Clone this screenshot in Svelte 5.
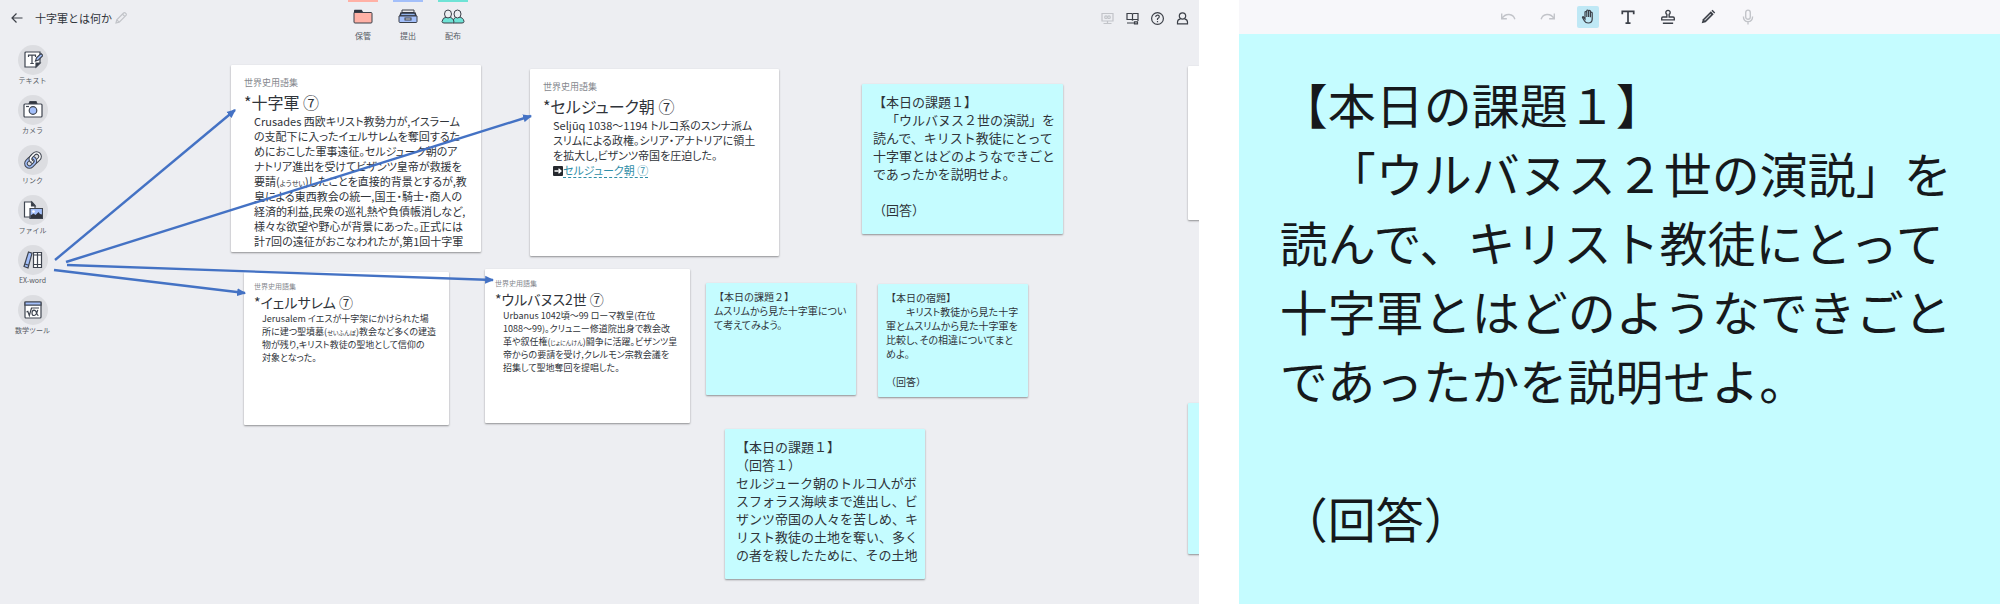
<script>
	const tools = [
		{ id: 'text', label: 'テキスト' },
		{ id: 'camera', label: 'カメラ' },
		{ id: 'link', label: 'リンク' },
		{ id: 'file', label: 'ファイル' },
		{ id: 'exword', label: 'EX-word' },
		{ id: 'math', label: '数学ツール' }
	];

	const boxes = [
		{ id: 'store', label: '保管' },
		{ id: 'submit', label: '提出' },
		{ id: 'share', label: '配布' }
	];

	const source = '世界史用語集';

	const entries = [
		{
			x: 231,
			y: 65,
			w: 250,
			h: 187,
			title: '十字軍 ⑦',
			lines: [
				'Crusades 西欧キリスト教勢力が,イスラーム',
				'の支配下に入ったイェルサレムを奪回するた',
				'めにおこした軍事遠征。セルジューク朝のア',
				'ナトリア進出を受けてビザンツ皇帝が救援を',
				'要請(ようせい)したことを直接的背景とするが,教',
				'皇による東西教会の統一,国王・騎士・商人の',
				'経済的利益,民衆の巡礼熱や負債帳消しなど,',
				'様々な欲望や野心が背景にあった。正式には',
				'計7回の遠征がおこなわれたが,第1回十字軍'
			]
		},
		{
			x: 530,
			y: 69,
			w: 249,
			h: 187,
			title: 'セルジューク朝 ⑦',
			lines: [
				'Seljūq 1038〜1194 トルコ系のスンナ派ム',
				'スリムによる政権。シリア・アナトリアに領土',
				'を拡大し,ビザンツ帝国を圧迫した。'
			],
			link: 'セルジューク朝 ⑦'
		},
		{
			x: 244,
			y: 272,
			w: 205,
			h: 153,
			small: true,
			title: 'イェルサレム ⑦',
			lines: [
				'Jerusalem イエスが十字架にかけられた場',
				'所に建つ聖墳墓(せいふんぼ)教会など多くの建造',
				'物が残り,キリスト教徒の聖地として信仰の',
				'対象となった。'
			]
		},
		{
			x: 485,
			y: 269,
			w: 205,
			h: 154,
			small: true,
			title: 'ウルバヌス2世 ⑦',
			lines: [
				'Urbanus 1042頃〜99 ローマ教皇(在位',
				'1088〜99)。クリュニー修道院出身で教会改',
				'革や叙任権(じょにんけん)闘争に活躍。ビザンツ皇',
				'帝からの要請を受け,クレルモン宗教会議を',
				'招集して聖地奪回を提唱した。'
			]
		}
	];

	const task = [
		'【本日の課題１】',
		'　「ウルバヌス２世の演説」を',
		'読んで、キリスト教徒にとって',
		'十字軍とはどのようなできごと',
		'であったかを説明せよ。',
		'',
		'（回答）'
	];

	const notes = [
		{ x: 862, y: 84, w: 201, h: 150, lines: task },
		{
			x: 706,
			y: 283,
			w: 150,
			h: 112,
			small: true,
			lines: ['【本日の課題２】', 'ムスリムから見た十字軍につい', 'て考えてみよう。']
		},
		{
			x: 878,
			y: 284,
			w: 150,
			h: 113,
			small: true,
			lines: [
				'【本日の宿題】',
				'　　キリスト教徒から見た十字',
				'軍とムスリムから見た十字軍を',
				'比較し、その相違についてまと',
				'めよ。',
				'',
				'（回答）'
			]
		},
		{
			x: 725,
			y: 429,
			w: 200,
			h: 150,
			lines: [
				'【本日の課題１】',
				'（回答１）',
				'セルジューク朝のトルコ人がボ',
				'スフォラス海峡まで進出し、ビ',
				'ザンツ帝国の人々を苦しめ、キ',
				'リスト教徒の土地を奪い、多く',
				'の者を殺したために、その土地'
			]
		},
		{ x: 1188, y: 403, w: 200, h: 151, lines: [] }
	];

	const arrows = [
		[55, 260, 235, 110],
		[66, 262, 531, 116],
		[67, 265, 493, 280],
		[54, 270, 245, 293]
	];

	// odd pieces are the readings written inside the parentheses
	const splitReading = (line) => line.split(/(?<=\()([ぁ-ん]+)(?=\))/);
	const place = (c) => `left: ${c.x}px; top: ${c.y}px; width: ${c.w}px; height: ${c.h}px`;
</script>

<div class="app">
	<main class="board">
		<header class="topbar">
			<div class="heading">
				<button class="icon-button" aria-label="戻る">
					<svg width="12" height="12" viewBox="0 0 12 12" class="line"><path d="M11.5 6H1M5.500 1.500L1 6l4.500 4.500" /></svg>
				</button>
				<h1>十字軍とは何か</h1>
				<button class="icon-button pale" aria-label="名前を編集">
					<svg width="12" height="12" viewBox="0 0 12 12" class="line"><path d="M1 11l.8-3.200L8.600 1a1.200 1.200 0 0 1 1.700 0l.7.7a1.200 1.200 0 0 1 0 1.700L4.200 10.200zM7.500 2.200l2.300 2.300M1.800 7.800l2.400 2.400" /></svg>
				</button>
			</div>

			<nav class="boxes">
				{#each boxes as box}
					<button class="box {box.id}">
						{#if box.id === 'store'}
							<svg width="22" height="16" viewBox="0 0 22 16">
								<path d="M2 5V1.500Q2 .8 2.700.8h7L11 3v2z" fill="#2f3440" />
								<path d="M2 3.500h17q1 0 1 1V13q0 1-1 1H3q-1 0-1-1z" fill="#ffb1a6" stroke="#3a3f49" />
							</svg>
						{:else if box.id === 'submit'}
							<svg width="22" height="16" viewBox="0 0 22 16">
								<path d="M5 1h12v2.500H5z" fill="#e7e8ec" stroke="#3a3f49" />
								<path d="M4 4h14l1 3H3z" fill="#8fb0e8" stroke="#2f3440" stroke-width="1.500" />
								<path d="M2 7h18v5.500q0 1-1 1H3q-1 0-1-1z" fill="#a3bffa" stroke="#3a3f49" />
								<rect x="8" y="9" width="6" height="2" fill="#dfe2ea" stroke="#3a3f49" />
							</svg>
						{:else}
							<svg width="24" height="16" viewBox="0 0 24 16">
								<g stroke="#3a3f49" fill="#6fe3d6">
									<path d="M12 14q-.5-5.500 4.500-6h1q5 .3 5.500 4.500 0 1.500-2 1.500z" />
									<ellipse cx="16.500" cy="5" rx="3.500" ry="4" fill="#edeef2" />
									<path d="M1 12.500Q1.500 8.300 6 8h1.500q5 .5 5.500 5 0 1-1.500 1H3q-2 0-2-1.500z" />
									<ellipse cx="7" cy="5" rx="3.500" ry="4" fill="#edeef2" />
								</g>
							</svg>
						{/if}
						<span>{box.label}</span>
					</button>
				{/each}
			</nav>

			<div class="actions">
				<button class="icon-button pale" aria-label="画面共有">
					<svg width="13" height="13" viewBox="0 0 13 13" class="line"><path d="M1 1.500h11v7.500H1zM2.500 11.500h8M6.500 9v2.500" /><circle cx="5" cy="5.200" r="1.300" /><circle cx="8" cy="5.200" r="1.300" /></svg>
				</button>
				<button class="icon-button" aria-label="表示">
					<svg width="13" height="13" viewBox="0 0 13 13" class="line"><path d="M6.500 2L5.500 1.500H1v6h4.500l1 .5 1-.5H12v-6H7.500zM6.500 2v6M1 11h7M12 7.500V9M8.500 9.800h3v2h-3z" /></svg>
				</button>
				<button class="icon-button" aria-label="ヘルプ">
					<svg width="13" height="13" viewBox="0 0 13 13" class="line"><circle cx="6.500" cy="6.500" r="5.900" /><path d="M4.700 5q0-1.900 1.800-1.900T8.300 4.800q0 1-1.800 2V8M6.500 9v1.200" /></svg>
				</button>
				<button class="icon-button" aria-label="アカウント">
					<svg width="13" height="13" viewBox="0 0 13 13" class="line"><circle cx="6.500" cy="4" r="3.200" /><path d="M4.500 6.800Q1.500 7.500 1.500 10v1.800h10V10q0-2.500-3-3.200" /></svg>
				</button>
			</div>
		</header>

		<nav class="tools">
			{#each tools as tool}
				<button class="tool">
					<span class="disc">
						<svg width="20" height="20" viewBox="0 0 20 20" fill="#fff" stroke="#3f4550" stroke-width="1.200">
							{#if tool.id === 'text'}
								<path d="M2 3q0-1 1-1h14v11l-4 4H2z" />
								<path d="M13 17v-4h4z" fill="#30343d" />
								<path d="M5.500 7V5.200h7V7M9 5.200v8M7.300 13.500h3.500" fill="none" />
								<path d="M12.500 11l1-3.200L18 3.500l2 2-4.500 4.500z" fill="#a3bffa" />
							{:else if tool.id === 'camera'}
								<path d="M6 4l1-2.500h6L14 4z" fill="#30343d" />
								<rect x="1" y="4" width="18" height="13" rx="1" />
								<circle cx="10" cy="10.500" r="3.800" fill="#a3bffa" />
								<path d="M3 6.500h3" />
							{:else if tool.id === 'link'}
								<g fill="none" transform="rotate(-45 10 10)">
									<rect x="8" y="6.500" width="10.500" height="7" rx="3.500" stroke-width="3.600" />
									<rect x="8" y="6.500" width="10.500" height="7" rx="3.500" stroke="#fff" stroke-width="1.600" />
									<rect x="1.500" y="6.500" width="10.500" height="7" rx="3.500" stroke-width="3.600" />
									<rect x="1.500" y="6.500" width="10.500" height="7" rx="3.500" stroke="#a3bffa" stroke-width="1.600" />
									<path d="M8 10q0-3.500 3.500-3.500h2" stroke-width="3.600" />
									<path d="M8 10q0-3.500 3.500-3.500h2.500" stroke="#fff" stroke-width="1.600" />
								</g>
							{:else if tool.id === 'file'}
								<path d="M1.500 2H9l3 3.500V17H1.500z" />
								<path d="M8.500 2v4H12z" fill="#30343d" />
								<path d="M7 8.500h12.500v10H7z" fill="#a3bffa" />
								<path d="M7.500 18v-2.500l3-2 2 1.500 3-3 1.500 2 2 .5V18z" fill="#30343d" stroke="none" />
								<circle cx="10.500" cy="11.500" r="1.300" stroke="none" />
							{:else if tool.id === 'exword'}
								<path d="M5.500 2l3.500 1.200L5 18l-4-1.500z" fill="#a3bffa" />
								<path d="M2 14l3.800 1.300" />
								<path d="M10.500 2.500h4v15h-4zM14.500 2.500h4v15h-4zM10.500 14.500h8M10.500 5h8" />
							{:else}
								<rect x="2" y="2" width="16" height="16" rx="1" />
								<path d="M2 2h16v3.200H2z" fill="#a3bffa" />
								<path d="M3.500 12l1.300-.6L6.300 15.500 8.500 8H16" fill="none" />
								<path d="M14.800 9.800q-1.500 5.700-4 5.700-1.800 0-1.800-2.500t2-2.800q2 0 2.800 3.300.5 2 1.700 2" fill="none" />
							{/if}
						</svg>
					</span>
					<span>{tool.label}</span>
				</button>
			{/each}
		</nav>

		{#each entries as entry}
			<article class="card entry" class:small={entry.small} style={place(entry)}>
				<p class="source">{source}</p>
				<h2><span>*</span>{entry.title}</h2>
				<div class="body">
					{#each entry.lines as line}
						<p>{#each splitReading(line) as piece, i}{#if i % 2}<span class="reading">{piece}</span>{:else}{piece}{/if}{/each}</p>
					{/each}
					{#if entry.link}
						<p class="see"><svg width="10" height="10" viewBox="0 0 10 10"><rect width="10" height="10" rx="1" fill="#25282d" /><path d="M1.500 5h6M5.500 2.800L8 5 5.500 7.200" fill="none" stroke="#fff" stroke-width="1.300" /></svg><a href="#seljuk">{entry.link}</a></p>
					{/if}
				</div>
			</article>
		{/each}

		<article class="card" style={place({ x: 1188, y: 66, w: 250, h: 154 })}></article>

		{#each notes as note}
			<article class="card note" class:small={note.small} style={place(note)}>
				{#each note.lines as line}
					<p class:full={/^[【（]/.test(line)}>{line}</p>
				{/each}
			</article>
		{/each}

		<svg class="arrows" aria-hidden="true">
			<defs>
				<marker id="head" viewBox="0 0 8 8" refX="7" refY="4" markerWidth="9" markerHeight="9" markerUnits="userSpaceOnUse" orient="auto">
					<path d="M0 .5L8 4 0 7.500z" fill="#4472c4" />
				</marker>
			</defs>
			{#each arrows as [x1, y1, x2, y2]}
				<line {x1} {y1} {x2} {y2} stroke="#4472c4" stroke-width="2.400" marker-end="url(#head)" />
			{/each}
		</svg>
	</main>

	<section class="viewer">
		<div class="toolbar">
			<button class="pale" aria-label="元に戻す">
				<svg width="16" height="16" viewBox="0 0 14 14" class="line"><path d="M1.500 4v4.500H6M1.800 8.300Q4 4.500 8 4.800q4 .3 5 4.200" /></svg>
			</button>
			<button class="pale" aria-label="やり直す">
				<svg width="16" height="16" viewBox="0 0 14 14" class="line"><path d="M12.500 4v4.500H8M12.200 8.300Q10 4.500 6 4.800 2 5.100 1 9" /></svg>
			</button>
			<button class="active" aria-label="移動">
				<svg width="14" height="16" viewBox="0 0 14 16" class="line"><path d="M4 10V3.500q0-1 .9-1t.9 1V8V2q0-1 .9-1t.9 1v6V2.300q0-1 .9-1t.9 1V8.300V4q0-.9.9-.9t.9.9v6q0 4-4 4-2.600 0-3.700-2L1.500 8.500Q1.300 7.500 2.300 7.700z" /></svg>
			</button>
			<button aria-label="文字">
				<svg width="16" height="16" viewBox="0 0 14 14"><path d="M2 4.500V2h10v2.500M7 2v10M4.800 12.300h4.400" fill="none" stroke="#3c4048" stroke-width="1.500" /></svg>
			</button>
			<button aria-label="スタンプ">
				<svg width="16" height="16" viewBox="0 0 14 14" class="line"><path d="M6 7V4.700a1.900 1.900 0 1 1 2 0V7h3.500q1 0 1 1v1.500h-11V8q0-1 1-1zM2.500 12.500h9" /></svg>
			</button>
			<button aria-label="ペン">
				<svg width="16" height="16" viewBox="0 0 14 14"><path d="M1.500 12.500l1-3.500L9.500 2 12 4.500l-7 7z" fill="#3c4048" /><path d="M4 10l5.500-5.500" stroke="#c9cbd0" /><path d="M10 1.500l1-.8L13.300 3l-.8 1z" fill="#3c4048" /></svg>
			</button>
			<button class="pale" aria-label="録音">
				<svg width="16" height="16" viewBox="0 0 14 14" class="line"><rect x="5" y="1" width="4" height="8" rx="2" /><path d="M3 6.500q0 4.500 4 4.500t4-4.500M7 11v2.500" /></svg>
			</button>
		</div>
		<div class="page">
			{#each task as line}
				<p>{line}</p>
			{/each}
		</div>
	</section>
</div>

<style>
	:global(body) {
		background: #fff;
	}

	.app {
		display: grid;
		grid-template-columns: minmax(0, 63fr) minmax(0, 40fr);
		gap: 40px;
		min-height: 100vh;
		font-family: 'Noto Sans CJK JP', 'Noto Sans', sans-serif;
		text-spacing-trim: space-all;
		color: #30343a;
	}

	button {
		padding: 0;
		border: 0;
		background: none;
		font: inherit;
		color: inherit;
		cursor: pointer;
	}

	svg {
		display: block;
	}

	h1,
	h2,
	p {
		margin: 0;
		font-weight: 400;
		white-space: pre;
	}

	.line {
		fill: none;
		stroke: #3c4048;
		stroke-width: 1.2;
	}

	.pale .line {
		stroke: #c2c4c9;
	}

	.board {
		position: relative;
		overflow: hidden;
		background: #edeef2;
	}

	.topbar {
		display: flex;
		align-items: flex-start;
		height: 45px;
		padding: 0 10px 0 11px;
	}

	.heading {
		display: flex;
		align-items: center;
		width: 337px;
		height: 36px;
	}

	h1 {
		margin: 0 3px 0 12px;
		font-size: 11px;
		line-height: 16px;
	}

	.boxes {
		display: flex;
		gap: 15px;
	}

	.box {
		display: flex;
		flex-direction: column;
		align-items: center;
		width: 30px;
		padding-top: 7px;
		border-top: 2px solid;
		font-size: 8px;
		line-height: 12px;
	}

	.box span {
		margin-top: 5px;
		color: #555a63;
	}

	.box.store {
		border-color: #ffb1a6;
	}

	.box.submit {
		border-color: #a3bffa;
	}

	.box.share {
		border-color: #6fe3d6;
	}

	.actions {
		display: flex;
		align-items: center;
		gap: 12px;
		height: 36px;
		margin-left: auto;
	}

	.tools {
		display: flex;
		flex-direction: column;
		align-items: center;
		gap: 10px;
		width: 65px;
	}

	.tool {
		display: flex;
		flex-direction: column;
		align-items: center;
		font-size: 7px;
		line-height: 10px;
		color: #555a63;
	}

	.disc {
		display: grid;
		place-items: center;
		width: 30px;
		height: 30px;
		border-radius: 50%;
		background: #dcdde1;
	}

	.card {
		position: absolute;
		box-sizing: border-box;
		overflow: hidden;
		background: #fff;
		border-radius: 1px;
		box-shadow: 0 1px 2px rgba(0, 0, 0, 0.4);
	}

	.entry {
		padding: 10px 13px 0;
		font-size: 11px;
		line-height: 15px;
		font-feature-settings: 'palt';
	}

	.source {
		font-size: 9px;
		color: #85888e;
	}

	.entry h2 {
		font-size: 16px;
		line-height: 24px;
	}

	.body {
		padding-left: 10px;
	}

	.body p {
		height: 15px;
	}

	.reading {
		font-size: 7px;
	}

	.see {
		display: flex;
		align-items: center;
	}

	.see a {
		color: #2f8ea8;
		text-decoration: underline dashed;
		text-underline-offset: 2px;
	}

	.entry.small {
		padding: 8px 10px 0;
		font-size: 9px;
		line-height: 13px;
	}

	.small .source {
		font-size: 7px;
	}

	.entry.small h2 {
		font-size: 14px;
		line-height: 19px;
	}

	.small .body {
		padding-left: 8px;
	}

	.small .body p {
		height: 13px;
	}

	.small .reading {
		font-size: 6px;
	}

	.note {
		padding: 9px 0 0 11px;
		background: #c5fcff;
		font-size: 13px;
		line-height: 18px;
	}

	.note p {
		min-height: 18px;
	}

	.note.small {
		padding: 7px 0 0 8px;
		font-size: 10px;
		line-height: 14px;
		font-feature-settings: 'palt';
	}

	.note.small p {
		min-height: 14px;
	}

	.note p.full {
		font-feature-settings: normal;
	}

	.arrows {
		position: absolute;
		inset: 0;
		width: 100%;
		height: 100%;
		pointer-events: none;
	}

	.viewer {
		display: flex;
		flex-direction: column;
	}

	.toolbar {
		display: flex;
		align-items: center;
		gap: 18px;
		height: 34px;
		padding-left: 258px;
		background: #f7f7fa;
	}

	.toolbar button {
		display: grid;
		place-items: center;
		width: 22px;
		height: 22px;
		border-radius: 2px;
	}

	.toolbar .active {
		background: #bfe8f5;
	}

	.page {
		flex: 1;
		padding: 35px 39px 0 41px;
		background: #c5fcff;
		color: #16191c;
		font-size: 48px;
		line-height: 69px;
	}

	.page p {
		min-height: 69px;
	}
</style>
